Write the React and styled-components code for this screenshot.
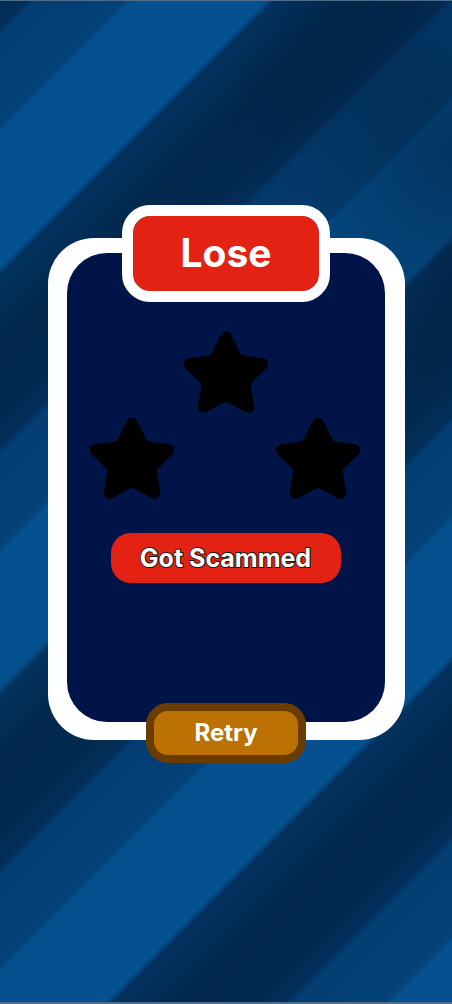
import React from "react";
import styled, { createGlobalStyle } from "styled-components";
import { Star } from "lucide-react";

const GlobalStyle = createGlobalStyle`
	html, body {
		margin: 0;
		padding: 0;
	}
	body {
		font-family: Inter, "Noto Sans", "Liberation Sans", sans-serif;
		background: #032d58;
	}
`;

// result screen shown after a round is over
function App() {
	return (
		<Page>
			<GlobalStyle />
			<Badge>
				<BadgeLabel>Lose</BadgeLabel>
			</Badge>
			<Card>
				<Panel>
					<Stars>
						<StarRow>
							<Star size={92} fill="#000" color="#000" strokeWidth={2} />
						</StarRow>
						<StarRow $spread>
							<Star size={92} fill="#000" color="#000" strokeWidth={2} />
							<Star size={92} fill="#000" color="#000" strokeWidth={2} />
						</StarRow>
					</Stars>
					<Verdict>Got Scammed</Verdict>
				</Panel>
			</Card>
			<RetryButton>
				<span>Retry</span>
			</RetryButton>
		</Page>
	);
}

const Page = styled.div`
	min-height: 100vh;
	box-sizing: border-box;
	display: flex;
	flex-direction: column;
	align-items: center;
	padding-top: 204px;
	border-top: 1px solid #4f6c89;
	border-bottom: 2px solid #4f6c89;
	background:
		radial-gradient(
			ellipse 230px 260px at 100% 150px,
			rgba(1, 18, 40, 0.45),
			rgba(1, 18, 40, 0) 100%
		),
		repeating-linear-gradient(
			135deg,
			#032b54 0px,
			#032f5a 18px,
			#033d72 24px,
			#044277 88px,
			#05508f 94px,
			#05518f 188px,
			#03325f 194px,
			#02284d 245px,
			#022a51 297px
		);
`;

const Badge = styled.div`
	position: relative;
	z-index: 2;
	width: 186px;
	height: 75px;
	border: 11px solid #fff;
	border-radius: 28px;
	background: #e32213;
	display: flex;
	align-items: center;
	justify-content: center;
	background-clip: padding-box;
`;

const BadgeLabel = styled.span`
	color: #fff;
	font-weight: 700;
	font-size: 39px;
	line-height: 1;
	margin-top: -2px;
`;

const Card = styled.div`
	margin-top: -64px;
	width: 357px;
	box-sizing: border-box;
	padding: 15px 20px 18px 19px;
	background: #fff;
	border-radius: 46px;
`;

const Panel = styled.div`
	height: 469px;
	background: #001448;
	border-radius: 40px;
	display: flex;
	flex-direction: column;
	align-items: center;
	padding-top: 75px;
	box-sizing: border-box;
`;

const Stars = styled.div`
	display: flex;
	flex-direction: column;
	align-items: center;
`;

const StarRow = styled.div`
	display: flex;
	gap: 94px;
	margin-top: ${(p) => (p.$spread ? "-6px" : "0")};
	margin-left: ${(p) => (p.$spread ? "-1px" : "0")};

	svg {
		display: block;
	}
`;

const Verdict = styled.div`
	margin-top: 27px;
	width: 230px;
	height: 50px;
	border-radius: 20px;
	background: #e32213;
	display: flex;
	align-items: center;
	justify-content: center;
	color: #fff;
	font-weight: 700;
	font-size: 25px;
	-webkit-text-stroke: 2px #1a1a1a;
	paint-order: stroke fill;
`;

const RetryButton = styled.div`
	position: relative;
	z-index: 2;
	margin-top: -37px;
	width: 144px;
	height: 44px;
	border: 8px solid #6a3c00;
	border-radius: 22px;
	background: #bb7104;
	display: flex;
	align-items: center;
	justify-content: center;

	span {
		color: #fff;
		font-weight: 700;
		font-size: 24px;
		line-height: 1;
	}
`;

export default App;
